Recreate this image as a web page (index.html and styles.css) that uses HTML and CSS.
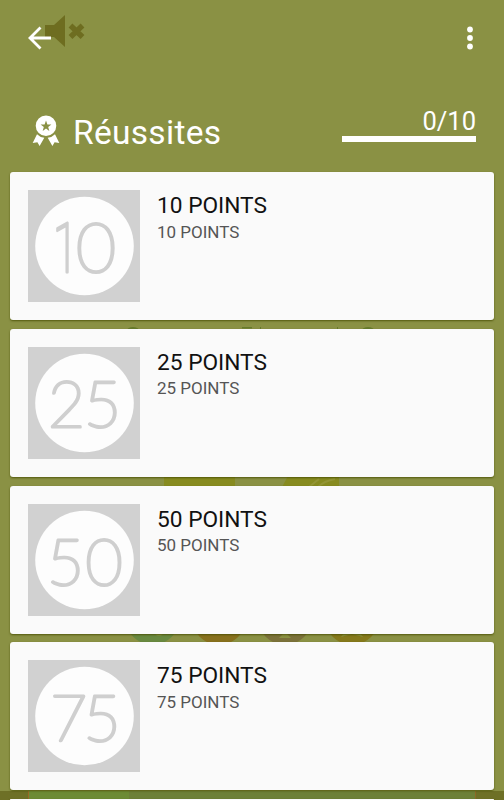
FILE: index.html
```html
<!DOCTYPE html>
<html lang="fr">
<head>
    <meta charset="UTF-8">
    <meta name="viewport" content="width=device-width, initial-scale=1.0">
    <title>Réussites</title>
    <link rel="stylesheet" href="styles.css">
</head>
<body>
    <!-- dimmed game screen behind the list -->
    <svg class="backdrop" width="504" height="800" viewBox="0 0 504 800">
        <g fill="#6e6d20">
            <path d="M45 25h9l11-10v32l-11-10h-9z"/>
            <path d="M70.500 25.500l12 11.500M82.500 25.500l-12 11.500" stroke="#6e6d20" stroke-width="5.500"/>
        </g>
        <g fill="#667b2b">
            <ellipse cx="133" cy="330" rx="6" ry="3"/>
            <rect x="242" y="327" width="10" height="1.500"/>
            <rect x="260" y="327" width="1" height="3"/>
            <rect x="337" y="327" width="1" height="3"/>
            <ellipse cx="368" cy="330" rx="6" ry="3"/>
        </g>
        <rect x="164" y="474" width="71" height="15" fill="#878b20"/>
        <path d="M289 474h50v15h-58z" fill="#878b20"/>
        <path d="M309 487l10-8M318 487q6-6 17-8" stroke="#939535" stroke-width="2" fill="none"/>
        <circle cx="152.500" cy="618" r="27" fill="#688940"/>
        <circle cx="219" cy="618" r="27" fill="#87701d"/>
        <circle cx="285" cy="618" r="27" fill="#7b713a"/>
        <circle cx="352" cy="618" r="27" fill="#85791b"/>
        <circle cx="159" cy="632" r="4" fill="#849745"/>
        <rect x="215" y="631" width="8" height="3" fill="#948c39"/>
        <path d="M285 632l6 6h-12z" fill="#8b9142"/>
        <path d="M341 637l3-4h16l3 4-11-3z" fill="#8d923b"/>
        <rect x="0" y="791" width="504" height="9" fill="#6e7026"/>
        <rect x="28" y="791" width="448" height="9" fill="#6d8037"/>
        <rect x="29" y="791" width="100" height="9" fill="#6d8b35"/>
        <rect x="28" y="791" width="1" height="9" fill="#9a6925"/>
        <rect x="475" y="791" width="1" height="9" fill="#8e6925"/>
    </svg>

    <header class="header">
        <div class="toolbar">
            <svg class="icon-back" width="24" height="24" viewBox="0 0 24 24">
                <path d="M23 12H2M12.500 1.500L2 12l10.500 10.500"/>
            </svg>
            <svg class="icon-more" width="8" height="24" viewBox="0 0 8 24">
                <circle cx="4" cy="3.500" r="2.900"/>
                <circle cx="4" cy="12" r="2.900"/>
                <circle cx="4" cy="20.500" r="2.900"/>
            </svg>
        </div>
        <div class="heading">
            <svg class="icon-medal" width="28" height="32" viewBox="0 0 28 32">
                <path fill-rule="evenodd" d="M14 .5a10.300 10.300 0 1 1 0 20.600a10.300 10.300 0 1 1 0-20.600zM14 5.600l-1.400 3.800-4 .1 3.200 2.500-1.100 3.900 3.300-2.300 3.300 2.300-1.100-3.900 3.200-2.500-4-.1z"/>
                <path d="M5 19.300q3 3.100 7.300 3.500L7.600 31l-2.200-3.700-4.700.8zM23 19.300q-3 3.100-7.300 3.500l4.700 8.200 2.200-3.700 4.700.8z"/>
            </svg>
            <h1 class="title">Réussites</h1>
            <div class="progress">
                <span class="count">0/10</span>
                <div class="bar"></div>
            </div>
        </div>
    </header>

    <main class="list">
        <article class="card">
            <svg class="badge" viewBox="0 0 112 112">
                <circle cx="56.500" cy="56" r="49.300"/>
                <text class="large" y="82"><tspan class="one" x="25" textLength="25" lengthAdjust="spacingAndGlyphs">1</tspan><tspan x="48">0</tspan></text>
            </svg>
            <div class="info">
                <h2>10 POINTS</h2>
                <p>10 POINTS</p>
            </div>
        </article>
        <article class="card">
            <svg class="badge" viewBox="0 0 112 112">
                <circle cx="56.500" cy="56" r="49.300"/>
                <text x="20 56" y="79.500">25</text>
            </svg>
            <div class="info">
                <h2>25 POINTS</h2>
                <p>25 POINTS</p>
            </div>
        </article>
        <article class="card">
            <svg class="badge" viewBox="0 0 112 112">
                <circle cx="56.500" cy="56" r="49.300"/>
                <text x="19 57.500" y="81">50</text>
            </svg>
            <div class="info">
                <h2>50 POINTS</h2>
                <p>50 POINTS</p>
            </div>
        </article>
        <article class="card">
            <svg class="badge" viewBox="0 0 112 112">
                <circle cx="56.500" cy="56" r="49.300"/>
                <text x="22 55.500" y="81">75</text>
            </svg>
            <div class="info">
                <h2>75 POINTS</h2>
                <p>75 POINTS</p>
            </div>
        </article>
        <article class="card next"></article>
    </main>
</body>
</html>
```
FILE: styles.css
```css
* { box-sizing: border-box; margin: 0; padding: 0; }
body {
    height: 800px; overflow: hidden;
    background: #8a9144; color: #fff;
    font-family: Roboto, "Liberation Sans", sans-serif;
}
.backdrop { position: absolute; left: 0; top: 0; z-index: -1; }

.header { height: 172px; padding: 26px 28px 0; }
.toolbar { display: flex; justify-content: space-between; height: 88px; }
.icon-back { fill: none; stroke: #fff; stroke-width: 2.8; }
.icon-more { margin-right: 2px; fill: #fff; }
.heading { display: flex; align-items: flex-start; }
.icon-medal { margin: 1px 0 0 4px; fill: #fff; }
.title { margin-left: 13px; font-size: 33.500px; font-weight: 400; line-height: 37px; letter-spacing: 0.3px; }
.progress { width: 134.500px; margin-left: auto; margin-top: -8px; text-align: right; }
.count { display: block; font-size: 25.500px; font-weight: 400; line-height: 30px; }
.bar { height: 6px; background: #fff; }

.list { display: flex; flex-direction: column; gap: 8.800px; height: 628px; padding: 0 10px; }
.card {
    display: flex; flex-shrink: 0; gap: 17px;
    height: 148px; padding: 18px;
    background: #fafafa; border-radius: 3px;
    box-shadow: 0 1px 2px rgba(70, 75, 0, 0.8);
}
.next { height: 0.800px; padding: 0; }
.badge { width: 112px; height: 112px; background: #d1d1d1; }
.badge circle { fill: #fdfdfd; }
.badge text {
    font-family: Lato, sans-serif; font-size: 64px; font-weight: 100;
    fill: #cfcfcf; stroke: #cfcfcf; stroke-width: 3px;
    stroke-linejoin: round;
}
.badge .large { font-size: 69px; }
.badge .one { font-family: Roboto, sans-serif; }
.info h2 { color: #111; font-size: 22.700px; font-weight: 400; line-height: 32.500px; }
.info p { color: #555; font-size: 17px; line-height: 19.500px; }
```
